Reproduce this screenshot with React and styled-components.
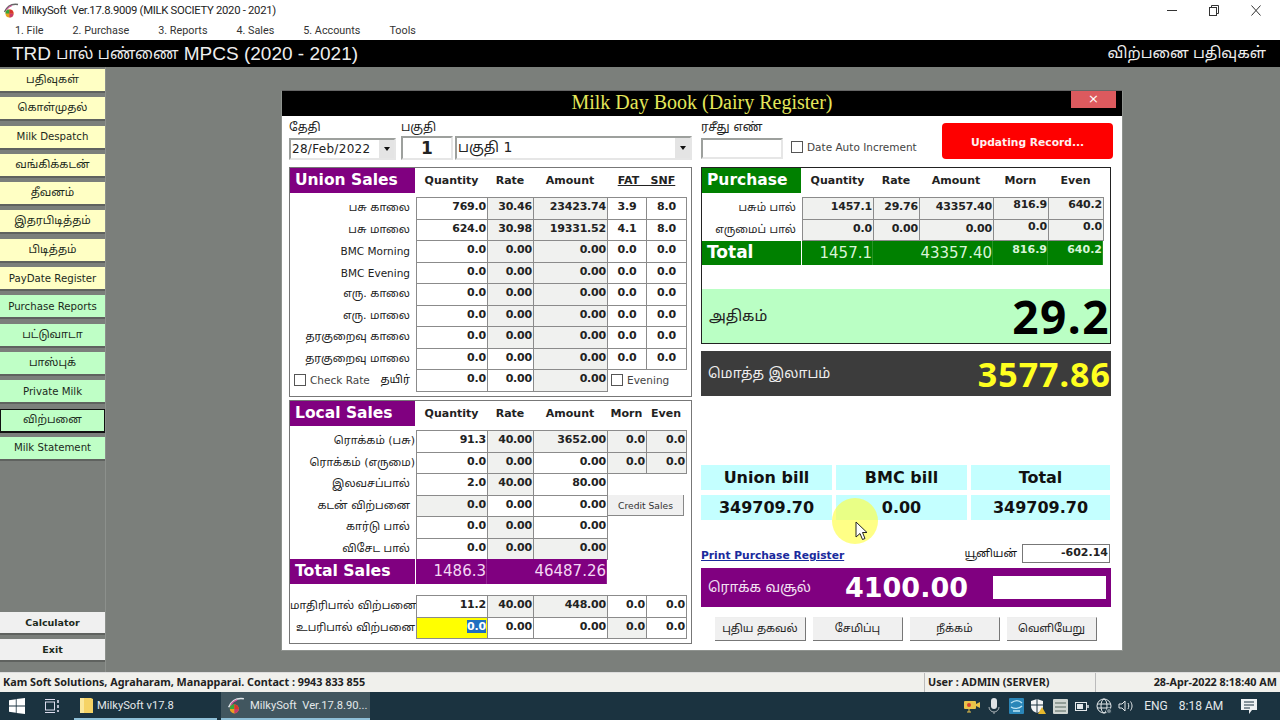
import React from "react";
import styled, { createGlobalStyle } from "styled-components";

const UI = `"DejaVu Sans", "Noto Sans Tamil", "Noto Sans", sans-serif`;
const SEGOE = `Roboto, "Noto Sans", sans-serif`;
const HUM = `"Noto Sans", "Open Sans", sans-serif`;

const Global = createGlobalStyle`
  html, body { margin: 0; padding: 0; background: #7b7f7b; }
  * { box-sizing: border-box; }
`;
const Root = styled.div`
  position: relative; width: 1280px; height: 720px; overflow: hidden;
  display: flex; flex-direction: column; font-family: ${UI}; color: #111;
`;
const TitleBar = styled.div`
  height: 20px; background: #fff; display: flex; align-items: center; padding-left: 3px;
  font: 11.3px ${SEGOE}; letter-spacing: -0.3px; color: #222;
`;
const TitleText = styled.span`margin-left: 3px; flex: 1; white-space: nowrap;`;
const WinControls = styled.div`display: flex; width: 94px; justify-content: space-between; margin-right: 19px; align-items: center;`;
const MenuBar = styled.div`
  height: 20px; background: #fff; display: flex; align-items: center; gap: 29px; padding-left: 15px;
  font: 10.8px ${SEGOE}; color: #333;
`;
const Band = styled.div`
  height: 27px; background: #000; color: #eee; display: flex; align-items: center; justify-content: space-between;
  padding: 0 14px 0 12px; font: 19px "Liberation Sans", "Noto Sans Tamil", sans-serif; white-space: pre;
`;
const BandTamil = styled.span`font-size: 15.5px; vertical-align: 1px;`;
const BandRight = styled.span`font-size: 15.2px;`;
const Workspace = styled.div`height: 605px; display: flex; background: #7b7f7b;`;
const Sidebar = styled.nav`
  width: 106px; border-right: 1px solid #8c908c; display: flex; flex-direction: column; gap: 4.3px; padding: 2px 0 10px;
`;
const SideButton = styled.div`
  height: ${p => p.$tone === "gray" ? 23 : 24}px; flex: none; display: flex; align-items: center; justify-content: center;
  background: ${p => p.$tone === "green" ? "#bfffc6" : p.$tone === "gray" ? "#f0f0f0" : "#ffffc4"};
  border: ${p => p.$active ? "1px solid #111" : "0"};
  border-bottom: 2px solid ${p => p.$active ? "#111" : "#5f625f"};
  font-size: ${p => p.$tone === "gray" ? 9.5 : p.$latin ? 10.2 : 11}px; font-weight: ${p => p.$tone === "gray" ? 700 : 400};
  color: #1c2a1c; white-space: nowrap;
`;
const SideSpacer = styled.div`flex: 1;`;
const Window = styled.section`
  width: 842px; height: 561px; margin: 23px 0 0 175px; background: #fff; border: 1px solid #8f938f; border-top-color:#666;
  display: flex; flex-direction: column;
`;
const WindowHead = styled.header`
  position: relative; height: 25px; flex: none; background: #000; color: #e4e65a; text-align: center;
  font: 20px/23px "Liberation Serif", serif;
`;
const CloseBtn = styled.div`
  position: absolute; right: 6px; top: 0; width: 45px; height: 17px; background: #dc5a5e; color: #fff;
  font: 13px/16px ${UI}; text-align: center;
`;
const WindowBody = styled.div`display: grid; grid-template-columns: 403px 412px; column-gap: 9px; padding: 0 0 0 7px;`;
const Col = styled.div`display: flex; flex-direction: column;`;
const TopRow = styled.div`height: 51px; display: flex; gap: 5px; padding-top: 4px;`;
const FieldStack = styled.div`display: flex; flex-direction: column; flex: ${p => p.$grow ? 1 : "none"}; margin-left: ${p => p.$ml || 0}px;`;
const FieldLabel = styled.label`height: 16px; font-size: 12px; line-height: 15px; color: #222; white-space: nowrap;`;
const Sunken = styled.div`
  height: ${p => p.$h || 24}px; width: ${p => p.$w ? p.$w + "px" : "auto"}; margin-top: ${p => p.$mt || 0}px;
  border: 2px solid #9da09d; border-right-color: #e6e6e6; border-bottom-color: #e6e6e6; background: #fff;
  display: flex; align-items: center; font-size: ${p => p.$fs || 12}px; font-weight: ${p => p.$bold ? 700 : 400};
  justify-content: ${p => p.$center ? "center" : "space-between"}; padding-left: ${p => p.$center ? 0 : 1}px;
  letter-spacing: ${p => p.$ls || 0}px; color: #222;
`;
const DropArrow = styled.span`
  width: 15px; height: 100%; background: #e4e4e4; display: flex; align-items: center; justify-content: center;
  &::after { content: ""; border: 3.5px solid transparent; border-top: 4px solid #111; border-bottom: 0; }
`;
const CheckLabel = styled.label`
  display: inline-flex; align-items: center; gap: 4px; font-size: 10.5px; color: #444; white-space: nowrap;
  margin: ${p => p.$m || 0};
`;
const Box = styled.span`width: 12px; height: 12px; flex: none; background: #fff; border: 1px solid #555;`;
const RedBtn = styled.div`
  width: 171px; height: 36px; margin: 3px 0 0 auto; background: #fe0000; border-radius: 4px; color: #fff0f0;
  display: flex; align-items: center; justify-content: center; font-size: 10.7px; font-weight: 700; padding-top: 3px;
`;
const Panel = styled.div`
  border: 1px solid ${p => p.$dark ? "#222" : "#777"}; background: #fff; height: ${p => p.$h}px; margin-top: ${p => p.$mt || 0}px;
  width: ${p => p.$w ? p.$w + "px" : "auto"};
`;
const Grid = styled.div`
  display: grid; grid-template-columns: ${p => p.$cols}; grid-auto-rows: 21.5px;
`;
const SalesCols = "126px 71px 46px 74px 39px 40px";
const BuyCols = "100px 71px 46px 74px 55px 55px";
const HeadRow = styled.div`
  display: grid; grid-template-columns: ${p => p.$cols}; height: 25px; margin-bottom: 4px; align-items: center;
`;
const HeadTitle = styled.div`
  height: 25px; background: ${p => p.$green ? "#008000" : "#800080"}; color: #fff; font-size: 15.5px; font-weight: 700;
  line-height: 24px; padding-left: 5px; margin-right: 1px; white-space: nowrap;
`;
const HeadCell = styled.div`
  font-size: 11px; font-weight: 700; text-align: center; grid-column: span ${p => p.$span || 1}; white-space: pre; color: #222;
  text-decoration: ${p => p.$u ? "underline" : "none"};
`;
const RowLabel = styled.div`
  text-align: right; padding-right: ${p => p.$pr ?? 6}px; font-size: ${p => p.$fs || 11}px; line-height: 22px; color: #222; white-space: nowrap;
`;
const Cell = styled.div`
  margin: 0 -1px -1px 0; border: 1px solid #8b8b8b; background: ${p => p.$bg === "g" ? "#f0f1ef" : p.$bg === "y" ? "#ffff00" : "#fff"};
  font-size: 11px; font-weight: 700; line-height: ${p => p.$lh || 17}px; letter-spacing: -0.2px; color: #222;
  text-align: ${p => p.$a || "right"}; padding: 0 ${p => p.$a === "center" ? 0 : 1}px; white-space: nowrap;
`;
const Selected = styled.span`background: #1f6fc0; color: #fff;`;
const Empty = styled.div`grid-column: span ${p => p.$span || 1};`;
const EveningCell = styled.div`grid-column: span 2; padding-left: 4px; display: flex; align-items: center;`;
const CheckRow = styled.div`display: flex; align-items: center; justify-content: space-between; padding: 0 6px 0 4px; font-size: 11px;`;
const CreditBtn = styled.div`
  grid-column: span 2; margin: 0 2px 0 1px; background: #f0f0f0; border-right: 1px solid #888; border-bottom: 1px solid #888;
  font-size: 9.2px; text-align: center; line-height: 21px; color: #333;
`;
const TotalTitle = styled.div`
  grid-column: 1; background: #800080; color: #fff; font-size: 15.7px; font-weight: 700; line-height: 24px; padding-left: 5px; margin-right: 1px;
`;
const GreenTitle = styled(TotalTitle)`background: #008000; font-size: 17px; line-height: 22px;`;
const TotalValue = styled.div`
  grid-column: span ${p => p.$span || 1}; background: ${p => p.$green ? "#008000" : "#800080"};
  color: #f4d8f4; font-size: ${p => p.$small ? 11 : 15}px; font-weight: ${p => p.$small ? 700 : 400}; text-align: right;
  line-height: ${p => p.$small ? 17 : 25}px; white-space: nowrap; border-right: 1px solid rgba(255,255,255,.15);
  ${p => p.$green && "color:#d8f4d8;"}
`;
const TotalGrid = styled(Grid)`grid-auto-rows: ${p => p.$rh}px; margin-top: ${p => p.$mt || 0}px;`;
const Gap = styled.div`height: ${p => p.$h}px;`;
const Surplus = styled.div`
  height: 54px; margin-top: 24px; background: #baffc4; display: flex; align-items: center; justify-content: space-between;
  padding: 0 0 0 7px; font-size: 15px; color: #222;
`;
const SurplusLabel = styled.span`padding-top: 1px;`;
const BigNum = styled.span`
  font-size: ${p => p.$fs}px; font-weight: 700; color: ${p => p.$c}; letter-spacing: ${p => p.$ls || 0}px;
  font-family: ${HUM}; line-height: 1;
`;
const ProfitBar = styled.div`
  height: 45px; width: 410px; margin-top: 7px; background: #3c3c3c; display: flex; align-items: center; justify-content: space-between;
  padding: 0 0 0 7px; font-size: 14px; color: #eee;
`;
const Bills = styled.div`
  display: grid; width: 410px; grid-template-columns: 131px 131px 139px; column-gap: 4px; row-gap: 5px; grid-auto-rows: 25px; margin-top: 69px;
`;
const BillCell = styled.div`
  background: #c4ffff; display: flex; align-items: center; justify-content: center; font-size: 16px; font-weight: 700; color: #111;
`;
const LinkRow = styled.div`width: 410px; height: 24px; margin-top: 24px; display: flex; align-items: flex-start; justify-content: space-between; padding-right: 1px;`;
const PrintLink = styled.a`
  font-size: 10.7px; font-weight: 700; color: #1a2a9c; text-decoration: underline; white-space: nowrap; padding-top: 5px;
`;
const UnionGroup = styled.div`display: flex; align-items: center; gap: 5px; font-size: 11px;`;
const UnionInput = styled.div`
  width: 88px; height: 19px; border: 1px solid #777; font-size: 11px; font-weight: 700; text-align: right; padding-right: 1px; line-height: 15px; color: #222;
`;
const CollectBar = styled.div`
  height: 39px; width: 410px; background: #800080; color: #f2e0f2; display: flex; align-items: center; padding: 0 5px 0 7px; font-size: 14px;
`;
const CollectLabel = styled.span`width: 137px; white-space: nowrap;`;
const CollectValue = styled.span`width: 148px; font-size: 27px; font-weight: 700; color: #fff; white-space: nowrap;`;
const WhiteBox = styled.div`flex: 1; height: 23px; background: #fff;`;
const Actions = styled.div`display: flex; gap: 7px; margin: 10px 0 0 14px;`;
const ActionBtn = styled.div`
  width: ${p => p.$w}px; height: 24px; background: #f0f0f0; border-right: 1px solid #777; border-bottom: 1px solid #777; border-top:1px solid #eee;
  display: flex; align-items: center; justify-content: center; font-size: 11px; color: #222; white-space: nowrap;
`;
const StatusBar = styled.div`
  height: 20px; background: #f0f0ec; display: flex; font: 700 10.8px/18px ${HUM}; color: #222;
  border-top: 1px solid #ddd;
`;
const StatusCell = styled.div`
  width: ${p => p.$w}px; flex: ${p => p.$grow ? 1 : "none"}; padding: 0 3px; white-space: nowrap;
  text-align: ${p => p.$right ? "right" : "left"}; border-left: ${p => p.$line ? "1px solid #bbb" : 0};
`;
const Taskbar = styled.div`
  height: 28px; background: #1b3340; display: flex; align-items: center; color: #e3e8ea; font: 11.2px ${SEGOE};
`;
const TaskIcon = styled.div`width: ${p => p.$w}px; flex: none; display: flex; justify-content: center;`;
const TaskItem = styled.div`
  width: ${p => p.$w}px; height: 28px; margin-right: 4px; flex: none; display: flex; align-items: center; gap: ${p => p.$gap}px; padding-left: 6px;
  background: ${p => p.$active ? "#41565f" : "#1b3340"}; border-bottom: 2px solid #8fc0d8; white-space: nowrap; overflow: hidden;
`;
const Tray = styled.div`margin-left: auto; display: flex; align-items: center; height: 28px;`;
const TraySlot = styled.div`
  width: ${p => p.$w || 22}px; margin-right: ${p => p.$mr || 0}px; display: flex; justify-content: center; font-size: 12px; white-space: nowrap;
`;
const Highlight = styled.div`
  position: absolute; left: 832px; top: 498px; width: 46px; height: 46px; border-radius: 50%; background: rgba(255, 255, 60, .62); pointer-events: none;
`;
const Cursor = styled.svg`position: absolute; left: 855px; top: 521px; pointer-events: none;`;

const AppLogo = ({ s = 16, arc = "#666" }) => (
  <svg width={s} height={s} viewBox="0 0 16 16">
    <path d="M15 2.500C9 1.500 4 4.500 1.500 10" fill="none" stroke={arc} strokeWidth="1.4" />
    <path d="M9 3.500C6 4.500 4.500 6 3.500 8" fill="none" stroke="#d0579a" strokeWidth="1.2" />
    <circle cx="6.500" cy="11.500" r="4" fill="#e8a020" />
    <path d="M2.500 11.500a4 4 0 0 1 4-4v4z" fill="#36a83c" />
    <path d="M6.500 7.500a4 4 0 0 1 4 4h-4z" fill="#d8352e" />
    <path d="M6.500 11.500h4a4 4 0 0 1-4 4z" fill="#c83a6a" />
  </svg>
);
const Folder = () => (
  <svg width="13" height="17" viewBox="0 0 13 17"><path d="M0 1h11l2 1v14H0z" fill="#f6d365"/><path d="M0 1h4v15H0z" fill="#fbe79a"/></svg>
);
const WinLogo = () => (
  <svg width="16" height="16" viewBox="0 0 16 16" fill="#fff"><path d="M0 2.200 6.800 1.200V7.600H0zM7.600 1.100 16 0V7.600H7.600zM0 8.400H6.800V14.800L0 13.800zM7.600 8.400H16V16L7.600 14.900z"/></svg>
);
const TaskView = () => (
  <svg width="16" height="14" viewBox="0 0 16 14" fill="none" stroke="#dde" strokeWidth="1"><path d="M1 .5h10M1 13.500h10"/><rect x="1.500" y="3" width="9" height="8"/><path d="M14 1v3M14 6v3M14 11v2" strokeWidth="1.600"/></svg>
);

const unionRows = [
  ["பசு காலை", "769.0", "30.46", "23423.74", "3.9", "8.0"],
  ["பசு மாலை", "624.0", "30.98", "19331.52", "4.1", "8.0"],
  ["BMC Morning", "0.0", "0.00", "0.00", "0.0", "0.0"],
  ["BMC Evening", "0.0", "0.00", "0.00", "0.0", "0.0"],
  ["எரு. காலை", "0.0", "0.00", "0.00", "0.0", "0.0"],
  ["எரு. மாலை", "0.0", "0.00", "0.00", "0.0", "0.0"],
  ["தரகுறைவு காலை", "0.0", "0.00", "0.00", "0.0", "0.0"],
  ["தரகுறைவு மாலை", "0.0", "0.00", "0.00", "0.0", "0.0"],
];
const sideTop = [
  ["பதிவுகள்", "y"], ["கொள்முதல்", "y"], ["Milk Despatch", "y"], ["வங்கிக்கடன்", "y"], ["தீவனம்", "y"],
  ["இதரபிடித்தம்", "y"], ["பிடித்தம்", "y"], ["PayDate Register", "y"], ["Purchase Reports", "green"], ["பட்டுவாடா", "green"],
  ["பாஸ்புக்", "green"], ["Private Milk", "green"], ["விற்பனை", "green", true], ["Milk Statement", "green"],
];

export default function App() {
  return (
    <Root>
      <Global />
      <TitleBar>
        <AppLogo />
        <TitleText>MilkySoft&nbsp; Ver.17.8.9009 (MILK SOCIETY 2020 - 2021)</TitleText>
        <WinControls>
          <svg width="10" height="11" viewBox="0 0 10 11"><path d="M0 5.500h10" stroke="#333"/></svg>
          <svg width="10" height="11" viewBox="0 0 10 11" fill="none" stroke="#333"><rect x=".5" y="2.500" width="7" height="8"/><path d="M2.500 2.500v-2h7v8h-2"/></svg>
          <svg width="10" height="11" viewBox="0 0 10 11" stroke="#333"><path d="M.5.500l9 10M9.500.500l-9 10"/></svg>
        </WinControls>
      </TitleBar>
      <MenuBar>
        {["1. File", "2. Purchase", "3. Reports", "4. Sales", "5. Accounts", "Tools"].map(m => <span key={m}>{m}</span>)}
      </MenuBar>
      <Band>
        <span>TRD <BandTamil>பால் பண்ணை</BandTamil> MPCS (2020 - 2021)</span>
        <BandRight>விற்பனை பதிவுகள்</BandRight>
      </Band>
      <Workspace>
        <Sidebar>
          {sideTop.map(([t, tone, active]) => (
            <SideButton key={t} $tone={tone} $active={active} $latin={/[A-Za-z]/.test(t)}>{t}</SideButton>
          ))}
          <SideSpacer />
          <SideButton $tone="gray">Calculator</SideButton>
          <SideButton $tone="gray">Exit</SideButton>
        </Sidebar>
        <Window>
          <WindowHead>Milk Day Book (Dairy Register)<CloseBtn>×</CloseBtn></WindowHead>
          <WindowBody>
            <Col>
              <TopRow>
                <FieldStack>
                  <FieldLabel>தேதி</FieldLabel>
                  <Sunken $w={107} $h={22} $mt={2} $ls={0.3}>28/Feb/2022<DropArrow /></Sunken>
                </FieldStack>
                <FieldStack>
                  <FieldLabel>பகுதி</FieldLabel>
                  <Sunken $w={52} $center $bold $fs={17}>1</Sunken>
                </FieldStack>
                <FieldStack $grow $ml={-3}>
                  <FieldLabel />
                  <Sunken $fs={14}>பகுதி 1<DropArrow /></Sunken>
                </FieldStack>
              </TopRow>
              <Panel $h={230}>
                <HeadRow $cols={SalesCols}>
                  <HeadTitle>Union Sales</HeadTitle>
                  <HeadCell>Quantity</HeadCell><HeadCell>Rate</HeadCell><HeadCell>Amount</HeadCell>
                  <HeadCell $span={2} $u>{"FAT   SNF"}</HeadCell>
                </HeadRow>
                <Grid $cols={SalesCols}>
                  {unionRows.map((r, i) => (
                    <React.Fragment key={r[0]}>
                      <RowLabel $fs={/BMC/.test(r[0]) ? 10.5 : 11}>{r[0]}</RowLabel>
                      <Cell>{r[1]}</Cell>
                      <Cell $bg={i === 7 ? "w" : "g"}>{r[2]}</Cell>
                      <Cell $bg="g">{r[3]}</Cell>
                      <Cell $a="center">{r[4]}</Cell>
                      <Cell $a="center">{r[5]}</Cell>
                    </React.Fragment>
                  ))}
                  <CheckRow>
                    <CheckLabel><Box />Check Rate</CheckLabel>
                    <span>தயிர்</span>
                  </CheckRow>
                  <Cell>0.0</Cell><Cell>0.00</Cell><Cell $bg="g">0.00</Cell>
                  <EveningCell><CheckLabel><Box />Evening</CheckLabel></EveningCell>
                </Grid>
              </Panel>
              <Panel $h={244} $mt={3}>
                <HeadRow $cols={SalesCols}>
                  <HeadTitle>Local Sales</HeadTitle>
                  <HeadCell>Quantity</HeadCell><HeadCell>Rate</HeadCell><HeadCell>Amount</HeadCell>
                  <HeadCell>Morn</HeadCell><HeadCell>Even</HeadCell>
                </HeadRow>
                <Grid $cols={SalesCols}>
                  <RowLabel $pr={1}>ரொக்கம் (பசு)</RowLabel>
                  <Cell>91.3</Cell><Cell $bg="g">40.00</Cell><Cell $bg="g">3652.00</Cell><Cell $bg="g">0.0</Cell><Cell $bg="g">0.0</Cell>
                  <RowLabel $pr={1}>ரொக்கம் (எருமை)</RowLabel>
                  <Cell>0.0</Cell><Cell $bg="g">0.00</Cell><Cell>0.00</Cell><Cell $bg="g">0.0</Cell><Cell $bg="g">0.0</Cell>
                  <RowLabel>இலவசப்பால்</RowLabel>
                  <Cell>2.0</Cell><Cell $bg="g">40.00</Cell><Cell>80.00</Cell><Empty $span={2} />
                  <RowLabel>கடன் விற்பனை</RowLabel>
                  <Cell $bg="g">0.0</Cell><Cell>0.00</Cell><Cell>0.00</Cell><CreditBtn>Credit Sales</CreditBtn>
                  <RowLabel>கார்டு பால்</RowLabel>
                  <Cell>0.0</Cell><Cell $bg="g">0.00</Cell><Cell>0.00</Cell><Empty $span={2} />
                  <RowLabel>விசேட பால்</RowLabel>
                  <Cell>0.0</Cell><Cell $bg="g">0.00</Cell><Cell $bg="g">0.00</Cell><Empty $span={2} />
                </Grid>
                <TotalGrid $cols={SalesCols} $rh={25}>
                  <TotalTitle>Total Sales</TotalTitle>
                  <TotalValue>1486.3</TotalValue>
                  <TotalValue $span={2}>46487.26</TotalValue>
                </TotalGrid>
                <Gap $h={11} />
                <Grid $cols={SalesCols}>
                  <RowLabel $pr={1}>மாதிரிபால் விற்பனை</RowLabel>
                  <Cell>11.2</Cell><Cell $bg="g">40.00</Cell><Cell $bg="g">448.00</Cell><Cell>0.0</Cell><Cell>0.0</Cell>
                  <RowLabel $pr={1}>உபரிபால் விற்பனை</RowLabel>
                  <Cell $bg="y"><Selected>0.0</Selected></Cell><Cell>0.00</Cell><Cell>0.00</Cell><Cell $bg="g">0.0</Cell><Cell>0.0</Cell>
                </Grid>
              </Panel>
            </Col>
            <Col>
              <TopRow>
                <FieldStack>
                  <FieldLabel>ரசீது எண்</FieldLabel>
                  <Sunken $w={82} $h={21} $mt={2} />
                </FieldStack>
                <CheckLabel $m="7px 0 0 3px"><Box />Date Auto Increment</CheckLabel>
                <RedBtn>Updating Record...</RedBtn>
              </TopRow>
              <Panel $h={177} $dark $w={410}>
                <HeadRow $cols={BuyCols}>
                  <HeadTitle $green>Purchase</HeadTitle>
                  <HeadCell>Quantity</HeadCell><HeadCell>Rate</HeadCell><HeadCell>Amount</HeadCell>
                  <HeadCell>Morn</HeadCell><HeadCell>Even</HeadCell>
                </HeadRow>
                <Grid $cols={BuyCols}>
                  <RowLabel>பசும் பால்</RowLabel>
                  <Cell $bg="g">1457.1</Cell><Cell $bg="g">29.76</Cell><Cell $bg="g">43357.40</Cell><Cell $bg="g" $lh={14}>816.9</Cell><Cell $bg="g" $lh={14}>640.2</Cell>
                  <RowLabel>எருமைப் பால்</RowLabel>
                  <Cell $bg="g">0.0</Cell><Cell $bg="g">0.00</Cell><Cell $bg="g">0.00</Cell><Cell $bg="g" $lh={14}>0.0</Cell><Cell $bg="g" $lh={14}>0.0</Cell>
                </Grid>
                <TotalGrid $cols={BuyCols} $rh={24} $mt={1}>
                  <GreenTitle>Total</GreenTitle>
                  <TotalValue $green>1457.1</TotalValue>
                  <TotalValue $green $span={2}>43357.40</TotalValue>
                  <TotalValue $green $small>816.9</TotalValue>
                  <TotalValue $green $small>640.2</TotalValue>
                </TotalGrid>
                <Surplus><SurplusLabel>அதிகம்</SurplusLabel><BigNum $fs={46} $c="#000" $ls={1.500}>29.2</BigNum></Surplus>
              </Panel>
              <ProfitBar>மொத்த இலாபம்<BigNum $fs={34} $c="#ffff20" $ls={1}>3577.86</BigNum></ProfitBar>
              <Bills>
                <BillCell>Union bill</BillCell><BillCell>BMC bill</BillCell><BillCell>Total</BillCell>
                <BillCell>349709.70</BillCell><BillCell>0.00</BillCell><BillCell>349709.70</BillCell>
              </Bills>
              <LinkRow>
                <PrintLink>Print Purchase Register</PrintLink>
                <UnionGroup>யூனியன்<UnionInput>-602.14</UnionInput></UnionGroup>
              </LinkRow>
              <CollectBar>
                <CollectLabel>ரொக்க வசூல்</CollectLabel>
                <CollectValue>4100.00</CollectValue>
                <WhiteBox />
              </CollectBar>
              <Actions>
                <ActionBtn $w={91}>புதிய தகவல்</ActionBtn>
                <ActionBtn $w={90}>சேமிப்பு</ActionBtn>
                <ActionBtn $w={90}>நீக்கம்</ActionBtn>
                <ActionBtn $w={90}>வெளியேறு</ActionBtn>
              </Actions>
            </Col>
          </WindowBody>
        </Window>
      </Workspace>
      <StatusBar>
        <StatusCell $w={924}>Kam Soft Solutions, Agraharam, Manapparai. Contact : 9943 833 855</StatusCell>
        <StatusCell $w={171} $line>User : ADMIN (SERVER)</StatusCell>
        <StatusCell $grow $line $right>28-Apr-2022 8:18:40 AM</StatusCell>
      </StatusBar>
      <Taskbar>
        <TaskIcon $w={33}><WinLogo /></TaskIcon>
        <TaskIcon $w={37}><TaskView /></TaskIcon>
        <TaskIcon $w={4} />
        <TaskItem $w={143} $gap={4}><Folder />MilkySoft v17.8</TaskItem>
        <TaskItem $w={149} $gap={5} $active><AppLogo s={18} arc="#dfe5e8" />MilkySoft&nbsp; Ver.17.8.90...</TaskItem>
        <Tray>
          <TraySlot><svg width="16" height="14" viewBox="0 0 16 14"><rect y="2" width="12" height="8" rx="1" fill="#e8c24a"/><path d="M12 5l4-2v6l-4-2z" fill="#e8c24a"/><circle cx="5" cy="6" r="2" fill="#d8402e"/><path d="M5 10v3M3 13h4" stroke="#e8c24a"/></svg></TraySlot>
          <TraySlot><svg width="12" height="16" viewBox="0 0 12 16"><rect x="3" width="6" height="11" rx="3" fill="#dfe3e6"/><path d="M1 9a5 5 0 0 0 10 0M6 14v2" stroke="#aab2b6" fill="none"/></svg></TraySlot>
          <TraySlot><svg width="15" height="16" viewBox="0 0 15 16"><rect width="15" height="16" rx="1" fill="#2a86b8"/><path d="M2 5c4-3 8-3 11 0M2 9c3 2 8 2 11-1M4 13h7" stroke="#bfe6f5" strokeWidth="1.300" fill="none"/></svg></TraySlot>
          <TraySlot><svg width="16" height="16" viewBox="0 0 16 16"><path d="M7 1l6 2v5c0 4-3 6-6 7-3-1-6-3-6-7V3z" fill="#f2f4f5"/><path d="M7 1v14M1 7h12" stroke="#1b3340"/><path d="M12 9l4 7H8z" fill="#e5b82c"/></svg></TraySlot>
          <TraySlot><svg width="15" height="15" viewBox="0 0 15 15"><rect width="15" height="15" rx="1" fill="#cfd6d2"/><path d="M2 4h11M2 8h11M2 12h11" stroke="#55665f"/></svg></TraySlot>
          <TraySlot><svg width="14" height="9" viewBox="0 0 14 9" fill="none" stroke="#e3e8ea"><rect x=".5" y=".5" width="11" height="8"/><rect x="2" y="2" width="6" height="5" fill="#e3e8ea" stroke="none"/><path d="M13 3v3" strokeWidth="1.500"/></svg></TraySlot>
          <TraySlot><svg width="16" height="16" viewBox="0 0 16 16" fill="none" stroke="#e3e8ea"><circle cx="8" cy="8" r="7"/><ellipse cx="8" cy="8" rx="3" ry="7"/><path d="M1 6h14M1 10h14"/><circle cx="13" cy="13" r="2.500" fill="#7b8b93" stroke="#1b3340"/></svg></TraySlot>
          <TraySlot><svg width="16" height="14" viewBox="0 0 16 14" fill="none" stroke="#e3e8ea"><path d="M1 5h3l3-3v10l-3-3H1zM10 4c1 2 1 4 0 6M12.500 2.500c2 3 2 6 0 9"/></svg></TraySlot>
          <TraySlot $w={38}>ENG</TraySlot>
          <TraySlot $w={52}>8:18 AM</TraySlot>
          <TraySlot $w={44} $mr={9}><svg width="16" height="15" viewBox="0 0 16 15"><path d="M0 0h16v11h-5l-3 4v-4H0z" fill="#eef1f3"/><path d="M3 3h10M3 6h10M3 9h6" stroke="#1b3340"/></svg></TraySlot>
        </Tray>
      </Taskbar>
      <Highlight />
      <Cursor width="13" height="20" viewBox="0 0 13 20"><path d="M1 1v15l4-3.500 2.500 6 2.500-1-2.500-6H12z" fill="#fff" stroke="#222"/></Cursor>
    </Root>
  );
}
